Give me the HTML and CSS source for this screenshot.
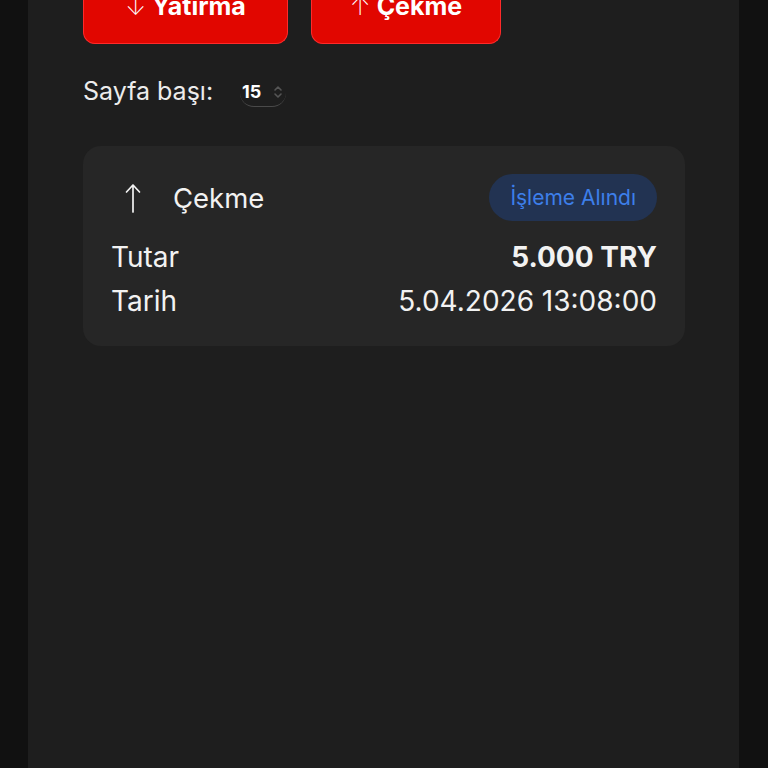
FILE: index.html
```html
<!DOCTYPE html>
<html lang="tr">
<head>
<meta charset="utf-8">
<title>İşlemler</title>
<link rel="stylesheet" href="styles.css">
</head>
<body>
<div class="shell">
  <main class="panel">
    <div class="actions">
      <button class="btn btn-deposit"><span class="btn-arrow">↓</span> Yatırma</button>
      <button class="btn btn-withdraw"><span class="btn-arrow">↑</span> Çekme</button>
    </div>
    <div class="per-page">
      <span class="per-page-label">Sayfa başı:</span>
      <span class="select">
        <span class="select-value">15</span>
        <svg class="select-caret" width="10" height="18" viewBox="0 0 10 18"><path d="M2 7 L5 4 L8 7 M2 11 L5 14 L8 11" fill="none" stroke="#555" stroke-width="1.6" stroke-linecap="round" stroke-linejoin="round"/></svg>
      </span>
    </div>
    <section class="card">
      <div class="card-head">
        <div class="card-title">
          <svg class="card-arrow" width="16" height="30" viewBox="0 0 16 30"><path d="M8 2 V29 M1.5 9 L8 2 L14.5 9" fill="none" stroke="#f2f2f2" stroke-width="1.7" stroke-linecap="round" stroke-linejoin="round"/></svg>
          <span>Çekme</span>
        </div>
        <span class="badge">İşleme Alındı</span>
      </div>
      <div class="row row-first"><span>Tutar</span><span class="amount">5.000 TRY</span></div>
      <div class="row"><span>Tarih</span><span>5.04.2026 13:08:00</span></div>
    </section>
  </main>
</div>
</body>
</html>
```
FILE: styles.css
```css
* { box-sizing: border-box; }
html, body { margin: 0; height: 100%; }
body {
  background: #111111;
  font-family: Inter, "Noto Sans", sans-serif;
  color: #f2f2f2;
}
.shell {
  display: flex;
  height: 768px;
  padding: 0 29px 0 28px;
}
.panel {
  flex: 1;
  background: #1e1e1e;
  padding: 0 54px 0 55px;
  overflow: hidden;
}
.actions {
  display: flex;
  gap: 23px;
}
.btn {
  height: 44px;
  display: flex;
  align-items: flex-end;
  justify-content: center;
  padding: 0 0 22px;
  border: 1px solid #ff2a2a;
  border-top: none;
  border-radius: 0 0 12px 12px;
  background: #e10600;
  color: #fff;
  font-family: Inter, sans-serif;
  font-weight: 700;
  font-size: 25px;
  line-height: 30px;
}
.btn-deposit { width: 205px; }
.btn-withdraw { width: 190px; }
.btn-arrow { font-weight: 200; margin-right: 6px; }
.per-page {
  display: flex;
  align-items: center;
  margin-top: 32px;
  height: 30px;
}
.per-page-label {
  font-size: 25px;
  margin-right: 27px;
  color: #ececec;
}
.select {
  display: flex;
  align-items: center;
  gap: 12px;
  height: 30px;
  padding: 0 3px 0 2px;
  margin-top: 2px;
  border-bottom: 1.5px solid #4a4a4a;
  border-radius: 14px;
}
.select-value {
  font-size: 18px;
  font-weight: 700;
  color: #fff;
}
.card {
  margin-top: 40px;
  background: #262626;
  border-radius: 18px;
  padding: 28px 28px 28px;
}
.card-head {
  display: flex;
  justify-content: space-between;
  align-items: center;
  height: 47px;
}
.card-title {
  display: flex;
  align-items: center;
  gap: 32px;
  padding-left: 14px;
  font-size: 27.5px;
}
.card-arrow { flex: none; }
.badge {
  display: flex;
  align-items: center;
  height: 47px;
  padding: 0 21px;
  border-radius: 24px;
  background: #223352;
  color: #3d7fea;
  font-size: 21px;
}
.row {
  display: flex;
  justify-content: space-between;
  font-size: 28px;
  line-height: 34px;
  margin-top: 10px;
}
.row-first { margin-top: 19px; }
.amount { font-weight: 700; }
```
